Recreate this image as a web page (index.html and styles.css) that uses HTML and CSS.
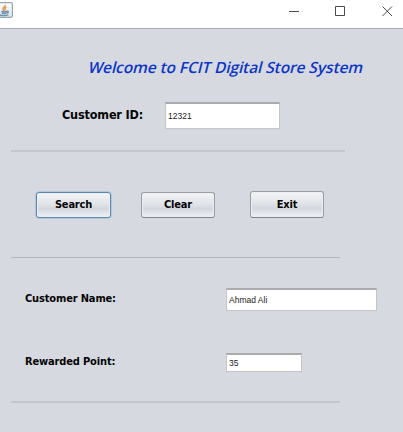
FILE: index.html
```html
<!DOCTYPE html>
<html lang="en">
<head>
<meta charset="utf-8">
<title>FCIT Digital Store System</title>
<link rel="stylesheet" href="styles.css">
</head>
<body>
<header class="titlebar">
  <svg class="java" width="14" height="19" viewBox="0 0 14 19">
    <defs><linearGradient id="g" x2="0" y2="1"><stop offset="0" stop-color="#fff"/><stop offset="1" stop-color="#dde3e8"/></linearGradient></defs>
    <rect x="-4" y="2.7" width="16.4" height="14.6" rx="1.5" fill="url(#g)" stroke="#93a7b8" stroke-width="1.2"/>
    <path d="M5 5c.8 1.500-2.400 2.500-1.900 4 .2.700.9 1 1.300 1.500M6.200 7c-1.700 1.200-1.500 1.700-.7 3" fill="none" stroke="#ee9a45" stroke-width="1.600"/>
    <path d="M1.300 11.500h5.700M1.800 13.200h4.900M0 15c2.500.7 6 .6 8.500-.2M7 11.300c2.100-.4 1.800 1.600-.2 1.800" fill="none" stroke="#6d8fab" stroke-width="1.400"/>
  </svg>
  <svg class="controls" width="113" height="22" viewBox="0 0 113 22" fill="none" stroke="#4b4b4b">
    <path d="M0 11.500h10"/>
    <path d="M46.500 6.500h9v9h-9z"/>
    <path d="M93.500 6.500l9.500 9.500M103 6.500L93.500 16"/>
  </svg>
</header>
<main class="form">
  <h1 class="title">Welcome to FCIT Digital Store System</h1>
  <div class="row lookup">
    <label class="label label-id" for="cid">Customer ID:</label>
    <input class="field field-id" id="cid" value="12321">
  </div>
  <hr class="rule rule-first">
  <div class="actions">
    <button class="btn focused">Search</button>
    <button class="btn clear">Clear</button>
    <button class="btn exit">Exit</button>
  </div>
  <hr class="rule thin">
  <div class="row name">
    <label class="label" for="cname">Customer Name:</label>
    <input class="field field-name" id="cname" value="Ahmad Ali">
  </div>
  <div class="row points">
    <label class="label" for="pts">Rewarded Point:</label>
    <input class="field field-points" id="pts" value="35">
  </div>
  <hr class="rule">
</main>
</body>
</html>
```
FILE: styles.css
```css
* { box-sizing: border-box; }
body { margin: 0; width: 403px; height: 432px; overflow: hidden; background: #d6d9e0; color: #050505; font-family: "DejaVu Sans Condensed", "DejaVu Sans", sans-serif; }
.titlebar { height: 29px; display: flex; justify-content: space-between; background: #fff; border-bottom: 1px solid #a8abb9; }
.java { display: block; }
.controls { display: block; margin-right: 1px; }
.form { display: flex; flex-direction: column; align-items: flex-start; }
.title { margin: 26px 0 0 88.5px; height: 24px; font: 600 15.5px/24px "Open Sans", sans-serif; color: #0c35c9; white-space: nowrap; letter-spacing: -0.1px; transform: skewX(-14deg); }
.row { display: flex; align-items: center; }
.label { width: 201px; padding-bottom: 2px; font-size: 11px; font-weight: 700; white-space: nowrap; letter-spacing: -0.15px; }
.label-id { width: 103px; padding-bottom: 2px; font-size: 12.5px; letter-spacing: -0.15px; }
.lookup { margin: 23px 0 0 62px; height: 27px; }
.field { margin: 0; padding: 0 2px; border: 1px solid #c3c5c9; border-top: 2px solid #a9abae; border-radius: 0; background: #fff; color: #222; font: 8.5px "Liberation Sans", sans-serif; outline: 0; }
.field-id { width: 115px; height: 27px; }
.field-name { width: 151px; height: 23px; }
.field-points { width: 76px; height: 19px; }
.rule { width: 329px; height: 2px; margin: 0 0 0 11px; border: 0; background: #c3c6cd; }
.rule-first { width: 334px; margin-top: 21px; }
.thin { height: 1px; background: #b3b7c0; }
.actions { display: flex; align-items: center; height: 27px; margin: 39px 0 39px 36px; }
.btn { width: 75px; height: 26px; padding: 0; border: 1px solid #9b9ea5; border-bottom-color: #7f838b; border-radius: 3px; background: linear-gradient(#f4f5f7, #dfe2e7 48%, #d3d7de 65%, #eff1f5); box-shadow: inset 0 0 0 1px #eceef2; color: #050505; font: 700 11px "DejaVu Sans Condensed", "DejaVu Sans", sans-serif; letter-spacing: -0.2px; }
.focused { border-color: #5c88ae; box-shadow: 0 0 0 0.5px #8fb4d3, inset 0 0 0 1px #eceef2; }
.clear { margin-left: 30px; width: 74px; }
.exit { margin-left: 35px; height: 27px; width: 74px; }
.name { margin: 30px 0 0 25px; height: 23px; }
.points { margin: 42px 0 29px 25px; height: 19px; }
```
